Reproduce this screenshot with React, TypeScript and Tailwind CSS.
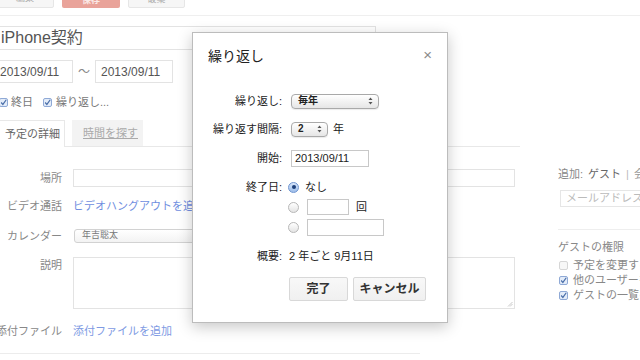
import React from 'react';

const FONT = '"Liberation Sans", "Noto Sans CJK JP", sans-serif';

const Arrows: React.FC = () => (
    <svg width="5" height="8" viewBox="0 0 5 8" className="shrink-0">
        <path d="M2.5 0.5 L4.5 3 L0.5 3 Z" fill="#555" />
        <path d="M2.5 7.5 L4.5 5 L0.5 5 Z" fill="#555" />
    </svg>
);

const MiniSelect: React.FC<{ label: string; width: string }> = ({ label, width }) => (
    <div
        className={`${width} h-[15px] flex items-center justify-between pl-[6px] pr-[5px] rounded-[4px] border border-[#a9a9a9] bg-gradient-to-b from-white to-[#e6e6e6] shadow-[0_1px_1px_rgba(0,0,0,0.08)] text-[10px] font-bold text-[#222]`}
    >
        <span className="leading-none">{label}</span>
        <Arrows />
    </div>
);

const Radio: React.FC<{ checked?: boolean }> = ({ checked }) =>
    checked ? (
        <div className="w-[11px] h-[11px] rounded-full border border-[#6f95d1] bg-gradient-to-b from-[#d8e6fa] to-[#9dbde9] flex items-center justify-center shrink-0">
            <div className="w-[4px] h-[4px] rounded-full bg-[#1d3f7a]" />
        </div>
    ) : (
        <div className="w-[11px] h-[11px] rounded-full border border-[#b7b7b7] bg-gradient-to-b from-white to-[#e4e4e4] shrink-0" />
    );

const Check: React.FC<{ on?: boolean }> = ({ on = true }) => (
    <div
        className={`w-[9px] h-[9px] rounded-[2px] border shrink-0 flex items-center justify-center ${
            on ? 'border-[#8fa9d6] bg-[#e3ecf9]' : 'border-[#d6d6d6] bg-[#f7f7f7]'
        }`}
    >
        {on && (
            <svg width="9" height="9" viewBox="0 0 9 9">
                <path d="M1.5 4.5 L3.7 7 L8 1" stroke="#4a6ea8" strokeWidth="1.5" fill="none" />
            </svg>
        )}
    </div>
);

const RepeatDialog: React.FC = () => (
    <div className="absolute left-[192px] top-[32px] w-[256px] h-[291px] bg-white border border-[#bcbcbc] shadow-[0_4px_14px_rgba(0,0,0,0.22)] text-[#222]">
        <div className="flex items-start justify-between pl-[15px] pr-[15px] pt-[13px]">
            <span className="text-[14px] leading-[20px]">繰り返し</span>
            <span className="text-[15px] leading-[18px] text-[#8a8a8a]">×</span>
        </div>

        <div className="mt-[25px] flex flex-col text-[11px]">
            <div className="flex items-center h-[20px]">
                <div className="w-[89px] text-right">繰り返し:</div>
                <div className="ml-[9px]">
                    <MiniSelect label="毎年" width="w-[88px]" />
                </div>
            </div>

            <div className="flex items-center h-[20px] mt-[8px]">
                <div className="w-[89px] text-right">繰り返す間隔:</div>
                <div className="ml-[9px] flex items-center gap-[5px]">
                    <MiniSelect label="2" width="w-[37px]" />
                    <span>年</span>
                </div>
            </div>

            <div className="flex items-center h-[20px] mt-[9px]">
                <div className="w-[89px] text-right">開始:</div>
                <div className="ml-[9px] w-[78px] h-[17px] border border-[#c8c8c8] pl-[3px] flex items-center text-[11px]">
                    2013/09/11
                </div>
            </div>

            <div className="flex mt-[9px]">
                <div className="w-[89px] text-right leading-[20px]">終了日:</div>
                <div className="ml-[6px] flex flex-col">
                    <div className="flex items-center h-[20px] gap-[6px]">
                        <Radio checked />
                        <span>なし</span>
                    </div>
                    <div className="flex items-center h-[20px]">
                        <Radio />
                        <div className="ml-[8px] w-[42px] h-[16px] border border-[#c8c8c8]" />
                        <span className="ml-[7px]">回</span>
                    </div>
                    <div className="flex items-center h-[20px]">
                        <Radio />
                        <div className="ml-[8px] w-[77px] h-[17px] border border-[#c8c8c8]" />
                    </div>
                </div>
            </div>

            <div className="flex items-center h-[20px] mt-[9px]">
                <div className="w-[89px] text-right">概要:</div>
                <div className="ml-[7px]">2 年ごと 9月11日</div>
            </div>

            <div className="flex mt-[11px] ml-[96px] gap-[5px]">
                <button className="w-[59px] h-[24px] rounded-[2px] border border-[#d8d8d8] bg-gradient-to-b from-[#f8f8f8] to-[#f0f0f0] text-[12px] font-bold text-[#333]">
                    完了
                </button>
                <button className="w-[73px] h-[24px] rounded-[2px] border border-[#d8d8d8] bg-gradient-to-b from-[#f8f8f8] to-[#f0f0f0] text-[12px] font-bold text-[#333]">
                    キャンセル
                </button>
            </div>
        </div>
    </div>
);

const FormRow: React.FC<{ label: string; className?: string; children: React.ReactNode; top?: boolean }> = ({
    label,
    className = '',
    children,
    top,
}) => (
    <div className={`flex ${top ? 'items-start' : 'items-center'} ${className}`}>
        <div className="w-[68px] text-right text-[11px] text-[#888] shrink-0">{label}</div>
        <div className="ml-[11px] flex-1 flex items-center">{children}</div>
    </div>
);

const App: React.FC = () => {
    return (
        <div className="relative w-[640px] h-[360px] overflow-hidden bg-white" style={{ fontFamily: FONT }}>
            {/* top action bar, mostly scrolled off */}
            <div className="h-[16px] border-b border-[#efefef] overflow-hidden">
                <div className="flex -mt-[20px] ml-[-4px] gap-[8px]">
                    <div className="w-[58px] h-[28px] rounded-[2px] border border-[#e6e6e6] bg-[#f6f6f6] flex items-end justify-center pb-[2px] text-[9px] text-[#aaa]">
                        編集
                    </div>
                    <div className="w-[58px] h-[28px] rounded-[2px] bg-[#e9a39a] flex items-end justify-center pb-[1px] text-[9px] font-bold text-[#fbe9e6]">
                        保存
                    </div>
                    <div className="w-[57px] h-[28px] rounded-[2px] border border-[#e6e6e6] bg-[#f6f6f6] flex items-end justify-center pb-[1px] text-[9px] text-[#aaa]">
                        破棄
                    </div>
                </div>
            </div>

            <div className="flex">
                {/* left column */}
                <div className="w-[526px] shrink-0 ml-[-6px] flex flex-col">
                    <div className="mt-[10px] w-[382px] h-[24px] border border-[#e3e3e3] pl-[6px] flex items-center text-[16px] text-[#555]">
                        iPhone契約
                    </div>

                    <div className="mt-[10px] flex items-center text-[12px] text-[#555]">
                        <div className="w-[79px] h-[23px] border border-[#e3e3e3] pl-[5px] flex items-center">2013/09/11</div>
                        <span className="mx-[5px] text-[#888]">〜</span>
                        <div className="w-[78px] h-[23px] border border-[#e3e3e3] pl-[5px] flex items-center">2013/09/11</div>
                    </div>

                    <div className="mt-[13px] h-[12px] flex items-center text-[11px] text-[#777]">
                        <div className="ml-[5px]">
                            <Check />
                        </div>
                        <span className="ml-[3px]">終日</span>
                        <div className="ml-[10px]">
                            <Check />
                        </div>
                        <span className="ml-[4px]">繰り返し...</span>
                    </div>

                    <div className="mt-[13px] flex items-end border-b border-[#e8e8e8] h-[26px]">
                        <div className="w-[71px] h-[27px] -mb-px bg-white border border-b-0 border-[#e8e8e8] pl-[10px] flex items-center text-[11px] text-[#666]">
                            予定の詳細
                        </div>
                        <div className="ml-[7px] w-[71px] h-[26px] bg-[#f3f3f3] pl-[11px] flex items-center text-[11px] text-[#aaa] underline">
                            時間を探す
                        </div>
                    </div>

                    <FormRow label="場所" className="mt-[22px]">
                        <div className="w-[442px] h-[18px] border border-[#e3e3e3]" />
                    </FormRow>

                    <FormRow label="ビデオ通話" className="mt-[11px] h-[16px]">
                        <span className="text-[11px] text-[#6f8ee0]">ビデオハングアウトを追加</span>
                    </FormRow>

                    <FormRow label="カレンダー" className="mt-[14px] h-[16px]">
                        <div className="ml-px w-[160px] h-[14px] rounded-[3px] border border-[#d2d2d2] bg-gradient-to-b from-white to-[#f3f3f3] pl-[7px] flex items-center text-[9px] text-[#777]">
                            年吉聡太
                        </div>
                    </FormRow>

                    <FormRow label="説明" className="mt-[13px]" top>
                        <div className="relative w-[442px] h-[52px] border border-[#e3e3e3]">
                            <svg width="6" height="6" viewBox="0 0 6 6" className="absolute right-[1px] bottom-[1px]">
                                <path d="M1 5.5 L5.5 1 M3 5.5 L5.5 3" stroke="#bbb" strokeWidth="0.8" />
                            </svg>
                        </div>
                    </FormRow>

                    <FormRow label="添付ファイル" className="mt-[14px] h-[16px]">
                        <span className="text-[11px] text-[#7e9ae3]">添付ファイルを追加</span>
                    </FormRow>

                    <div className="mt-[14px] w-[426px] border-b border-[#ececec]" />
                </div>

                {/* right column */}
                <div className="ml-[38px] min-w-0 flex-1 pt-[150px] flex flex-col text-[11px] text-[#888] overflow-hidden">
                    <div className="h-[16px] flex items-center whitespace-nowrap">
                        <span>追加:</span>
                        <span className="ml-[5px] text-[#666]">ゲスト</span>
                        <span className="ml-[5px] text-[#bbb]">|</span>
                        <span className="ml-[5px] text-[#999]">会議室</span>
                    </div>
                    <div className="mt-[8px] ml-[2px] h-[17px] border border-r-0 border-[#e6e6e6] pl-[5px] flex items-center text-[11px] text-[#bbb] whitespace-nowrap overflow-hidden">
                        メールアドレスを入力
                    </div>
                    <div className="mt-[22px] border-b border-[#eeeeee]" />
                    <div className="mt-[9px] h-[16px] flex items-center">ゲストの権限</div>
                    <div className="mt-[3px] h-[15px] flex items-center gap-[5px] whitespace-nowrap">
                        <div className="ml-[1px]">
                            <Check on={false} />
                        </div>
                        <span>予定を変更する</span>
                    </div>
                    <div className="h-[15px] flex items-center gap-[5px] whitespace-nowrap">
                        <div className="ml-[1px]">
                            <Check />
                        </div>
                        <span>他のユーザーを招待する</span>
                    </div>
                    <div className="h-[15px] flex items-center gap-[5px] whitespace-nowrap">
                        <div className="ml-[1px]">
                            <Check />
                        </div>
                        <span>ゲストの一覧を表示する</span>
                    </div>
                </div>
            </div>

            <RepeatDialog />
        </div>
    );
};

export default App;
